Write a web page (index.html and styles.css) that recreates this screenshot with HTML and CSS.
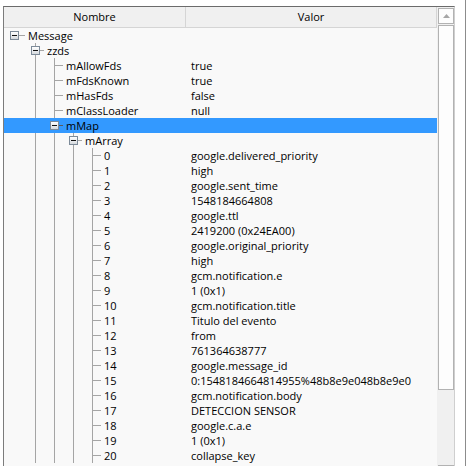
FILE: index.html
```html
<!DOCTYPE html>
<html>
<head>
<meta charset="utf-8">
<link rel="stylesheet" href="styles.css">
</head>
<body>
<div class="screen">
  <div class="frame">
    <div class="grid">
      <div class="head">
        <div class="hc name">Nombre</div>
        <div class="hc val">Valor</div>
      </div>
      <div class="rows">
        <div class="row"><div class="nc"><span class="slot s0 node root"><span class="btn"></span></span><span class="label">Message</span></div><div class="vc"></div></div>
        <div class="row"><div class="nc"><span class="slot s0"></span><span class="slot node"><span class="btn"></span></span><span class="label">zzds</span></div><div class="vc"></div></div>
        <div class="row"><div class="nc"><span class="slot s0"></span><span class="slot pipe"></span><span class="slot tee"></span><span class="label">mAllowFds</span></div><div class="vc">true</div></div>
        <div class="row"><div class="nc"><span class="slot s0"></span><span class="slot pipe"></span><span class="slot tee"></span><span class="label">mFdsKnown</span></div><div class="vc">true</div></div>
        <div class="row"><div class="nc"><span class="slot s0"></span><span class="slot pipe"></span><span class="slot tee"></span><span class="label">mHasFds</span></div><div class="vc">false</div></div>
        <div class="row"><div class="nc"><span class="slot s0"></span><span class="slot pipe"></span><span class="slot tee"></span><span class="label">mClassLoader</span></div><div class="vc">null</div></div>
        <div class="row sel"><div class="nc"><span class="slot s0"></span><span class="slot pipe"></span><span class="slot node"><span class="btn"></span></span><span class="label">mMap</span></div><div class="vc"></div></div>
        <div class="row"><div class="nc"><span class="slot s0"></span><span class="slot pipe"></span><span class="slot pipe"></span><span class="slot node"><span class="btn"></span></span><span class="label">mArray</span></div><div class="vc"></div></div>
        <div class="row"><div class="nc"><span class="slot s0"></span><span class="slot pipe"></span><span class="slot pipe"></span><span class="slot pipe"></span><span class="slot tee"></span><span class="label">0</span></div><div class="vc">google.delivered_priority</div></div>
        <div class="row"><div class="nc"><span class="slot s0"></span><span class="slot pipe"></span><span class="slot pipe"></span><span class="slot pipe"></span><span class="slot tee"></span><span class="label">1</span></div><div class="vc">high</div></div>
        <div class="row"><div class="nc"><span class="slot s0"></span><span class="slot pipe"></span><span class="slot pipe"></span><span class="slot pipe"></span><span class="slot tee"></span><span class="label">2</span></div><div class="vc">google.sent_time</div></div>
        <div class="row"><div class="nc"><span class="slot s0"></span><span class="slot pipe"></span><span class="slot pipe"></span><span class="slot pipe"></span><span class="slot tee"></span><span class="label">3</span></div><div class="vc">1548184664808</div></div>
        <div class="row"><div class="nc"><span class="slot s0"></span><span class="slot pipe"></span><span class="slot pipe"></span><span class="slot pipe"></span><span class="slot tee"></span><span class="label">4</span></div><div class="vc">google.ttl</div></div>
        <div class="row"><div class="nc"><span class="slot s0"></span><span class="slot pipe"></span><span class="slot pipe"></span><span class="slot pipe"></span><span class="slot tee"></span><span class="label">5</span></div><div class="vc">2419200 (0x24EA00)</div></div>
        <div class="row"><div class="nc"><span class="slot s0"></span><span class="slot pipe"></span><span class="slot pipe"></span><span class="slot pipe"></span><span class="slot tee"></span><span class="label">6</span></div><div class="vc">google.original_priority</div></div>
        <div class="row"><div class="nc"><span class="slot s0"></span><span class="slot pipe"></span><span class="slot pipe"></span><span class="slot pipe"></span><span class="slot tee"></span><span class="label">7</span></div><div class="vc">high</div></div>
        <div class="row"><div class="nc"><span class="slot s0"></span><span class="slot pipe"></span><span class="slot pipe"></span><span class="slot pipe"></span><span class="slot tee"></span><span class="label">8</span></div><div class="vc">gcm.notification.e</div></div>
        <div class="row"><div class="nc"><span class="slot s0"></span><span class="slot pipe"></span><span class="slot pipe"></span><span class="slot pipe"></span><span class="slot tee"></span><span class="label">9</span></div><div class="vc">1 (0x1)</div></div>
        <div class="row"><div class="nc"><span class="slot s0"></span><span class="slot pipe"></span><span class="slot pipe"></span><span class="slot pipe"></span><span class="slot tee"></span><span class="label">10</span></div><div class="vc">gcm.notification.title</div></div>
        <div class="row"><div class="nc"><span class="slot s0"></span><span class="slot pipe"></span><span class="slot pipe"></span><span class="slot pipe"></span><span class="slot tee"></span><span class="label">11</span></div><div class="vc">Titulo del evento</div></div>
        <div class="row"><div class="nc"><span class="slot s0"></span><span class="slot pipe"></span><span class="slot pipe"></span><span class="slot pipe"></span><span class="slot tee"></span><span class="label">12</span></div><div class="vc">from</div></div>
        <div class="row"><div class="nc"><span class="slot s0"></span><span class="slot pipe"></span><span class="slot pipe"></span><span class="slot pipe"></span><span class="slot tee"></span><span class="label">13</span></div><div class="vc">761364638777</div></div>
        <div class="row"><div class="nc"><span class="slot s0"></span><span class="slot pipe"></span><span class="slot pipe"></span><span class="slot pipe"></span><span class="slot tee"></span><span class="label">14</span></div><div class="vc">google.message_id</div></div>
        <div class="row"><div class="nc"><span class="slot s0"></span><span class="slot pipe"></span><span class="slot pipe"></span><span class="slot pipe"></span><span class="slot tee"></span><span class="label">15</span></div><div class="vc">0:1548184664814955%48b8e9e048b8e9e0</div></div>
        <div class="row"><div class="nc"><span class="slot s0"></span><span class="slot pipe"></span><span class="slot pipe"></span><span class="slot pipe"></span><span class="slot tee"></span><span class="label">16</span></div><div class="vc">gcm.notification.body</div></div>
        <div class="row"><div class="nc"><span class="slot s0"></span><span class="slot pipe"></span><span class="slot pipe"></span><span class="slot pipe"></span><span class="slot tee"></span><span class="label">17</span></div><div class="vc">DETECCION SENSOR</div></div>
        <div class="row"><div class="nc"><span class="slot s0"></span><span class="slot pipe"></span><span class="slot pipe"></span><span class="slot pipe"></span><span class="slot tee"></span><span class="label">18</span></div><div class="vc">google.c.a.e</div></div>
        <div class="row"><div class="nc"><span class="slot s0"></span><span class="slot pipe"></span><span class="slot pipe"></span><span class="slot pipe"></span><span class="slot tee"></span><span class="label">19</span></div><div class="vc">1 (0x1)</div></div>
        <div class="row"><div class="nc"><span class="slot s0"></span><span class="slot pipe"></span><span class="slot pipe"></span><span class="slot pipe"></span><span class="slot tee"></span><span class="label">20</span></div><div class="vc">collapse_key</div></div>
      </div>
    </div>
    <div class="vscroll">
      <div class="sbtn up"><svg width="7" height="4" viewBox="0 0 7 4"><path d="M0 4 L3.5 0 L7 4 Z" fill="#a6a6a6"/></svg></div>
      <div class="thumb"></div>
      <div class="track"></div>
      <div class="sbtn down"></div>
    </div>
  </div>
  <div class="gap"></div>
  <div class="edge"></div>
</div>
</body>
</html>
```
FILE: styles.css
```css
* { box-sizing: border-box; }
html, body { margin: 0; padding: 0; background: #fff; }
body {
  font-family: "Open Sans", "Noto Sans", sans-serif;
  font-size: 11px;
  color: #000;
  width: 467px;
  height: 466px;
  overflow: hidden;
}
.screen {
  display: flex;
  height: 466px;
  padding: 6px 0 0 3px;
}
.frame {
  width: 452px;
  height: 460px;
  border-top: 1px solid #6b6b6b;
  border-left: 1px solid #7c7c7c;
  border-right: 1px solid #cfcfcf;
  display: flex;
  overflow: hidden;
}
.grid {
  width: 433px;
  display: flex;
  flex-direction: column;
  background: #f9f9f9;
}
.head {
  display: flex;
  flex: none;
  height: 21px;
  background: #f0f0f0;
  border-bottom: 1px solid #d5d5d5;
  border-right: 1px solid #d5d5d5;
}
.hc { line-height: 20px; text-align: center; white-space: nowrap; }
.hc.name { width: 182px; border-right: 1px solid #d5d5d5; }
.hc.val { flex: 1; }

.rows { display: flex; flex-direction: column; }
.row { display: flex; height: 15px; line-height: 15px; flex: none; }
.row.sel { background: #3399ff; }
.nc { width: 182px; display: flex; flex: none; }
.vc { padding-left: 5px; white-space: nowrap; }
.label { margin-left: 3px; white-space: nowrap; }

.slot { width: 19px; height: 15px; flex: none; }
.slot.s0 { width: 21px; }
.pipe {
  background: linear-gradient(#a5a5a5, #a5a5a5) 10px 0 / 1px 100% no-repeat;
}
.tee {
  background:
    linear-gradient(#a5a5a5, #a5a5a5) 10px 0 / 1px 100% no-repeat,
    linear-gradient(#a5a5a5, #a5a5a5) 10px 7px / 9px 1px no-repeat;
}
.node {
  display: flex;
  align-items: flex-start;
  background:
    linear-gradient(#a5a5a5, #a5a5a5) 10px 0 / 1px 100% no-repeat,
    linear-gradient(#a5a5a5, #a5a5a5) 14px 7px / 100% 1px no-repeat;
}
.node.root, .row.sel .node {
  background: linear-gradient(#a5a5a5, #a5a5a5) 14px 7px / 100% 1px no-repeat;
}
.row.sel .node { background: linear-gradient(#5a5a5a, #5a5a5a) 14px 7px / 100% 1px no-repeat; }
.row.sel .pipe { background: none; }
.btn {
  width: 9px;
  height: 9px;
  margin: 3px 0 0 6px;
  border: 1px solid #7d8b99;
  background: linear-gradient(#ffffff, #d6dade);
  display: flex;
  align-items: center;
  justify-content: center;
}
.btn::before {
  content: "";
  width: 5px;
  height: 1px;
  background: #111;
}

.vscroll {
  width: 17px;
  background: #f0f0f0;
  display: flex;
  flex-direction: column;
  padding-left: 1px;
  overflow: hidden;
}
.sbtn {
  width: 16px;
  height: 16px;
  flex: none;
  border: 1px solid #b2b2b2;
  background: #fdfdfd;
  display: flex;
  align-items: center;
  justify-content: center;
}
.sbtn.up { margin-top: 1px; }
.thumb {
  width: 16px;
  height: 365px;
  margin-top: 1px;
  flex: none;
  border: 1px solid #b2b2b2;
  background: #fdfdfd;
}
.track { height: 75px; flex: none; }
.gap { width: 10px; flex: none; }
.edge { width: 1px; height: 466px; margin-top: -6px; background: #8c8c8c; flex: none; }
```
